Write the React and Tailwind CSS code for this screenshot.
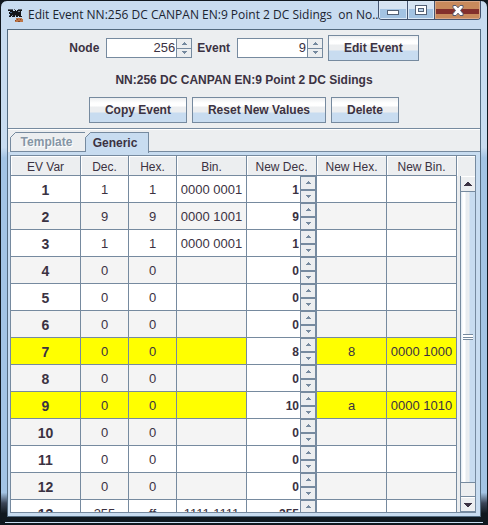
import React from "react";

const rows = [
  { ev: "1", dec: "1", hex: "1", bin: "0000 0001", newDec: "1" },
  { ev: "2", dec: "9", hex: "9", bin: "0000 1001", newDec: "9" },
  { ev: "3", dec: "1", hex: "1", bin: "0000 0001", newDec: "1" },
  { ev: "4", dec: "0", hex: "0", bin: "", newDec: "0" },
  { ev: "5", dec: "0", hex: "0", bin: "", newDec: "0" },
  { ev: "6", dec: "0", hex: "0", bin: "", newDec: "0" },
  { ev: "7", dec: "0", hex: "0", bin: "", newDec: "8", newHex: "8", newBin: "0000 1000" },
  { ev: "8", dec: "0", hex: "0", bin: "", newDec: "0" },
  { ev: "9", dec: "0", hex: "0", bin: "", newDec: "10", newHex: "a", newBin: "0000 1010" },
  { ev: "10", dec: "0", hex: "0", bin: "", newDec: "0" },
  { ev: "11", dec: "0", hex: "0", bin: "", newDec: "0" },
  { ev: "12", dec: "0", hex: "0", bin: "", newDec: "0" },
  { ev: "13", dec: "255", hex: "ff", bin: "1111 1111", newDec: "255" },
];

const headings = ["EV Var", "Dec.", "Hex.", "Bin.", "New Dec.", "New Hex.", "New Bin."];
const columns = ["w-[70px]", "w-[48px]", "w-[48px]", "w-[70px]", "w-[70px]", "w-[70px]", "w-[70px]"];

function Arrow({ down = false }) {
  return (
    <svg width="5" height="3" viewBox="0 0 5 3" shapeRendering="crispEdges" fill="#768a9f" className="block">
      <path d={down ? "M0 0H5V1H4V2H3V3H2V2H1V1H0Z" : "M2 0H3V1H4V2H5V3H0V2H1V1H2Z"} />
    </svg>
  );
}

function LocoIcon() {
  return (
    <svg width="16" height="16" viewBox="0 0 16 16" shapeRendering="crispEdges" className="mr-1 shrink-0">
      <path fill="#56606c" d="M0 2H5V3H0ZM6 2H7V3H6ZM10 2H14V3H10Z" />
      <path
        fill="#15171b"
        d="M0 3H5V4H7V3H8V4H9V3H14V4H13V9H14V10H11V9H10V10H8V9H7V10H4V9H3V10H1V9H2V7H1V5H2V4H0Z"
      />
      <path fill="#4d6f94" d="M2 5H4V6H2ZM1 8H2V9H1Z" />
      <path fill="#7d8792" d="M4 8H5V9H4ZM7 8H8V9H7ZM10 4H12V5H10Z" />
      <path fill="#bd7648" d="M8 11H14V12H15V15H7V13H8Z" />
      <path fill="#85492a" d="M9 12H10V13H9ZM12 12H13V13H12ZM10 14H12V15H10ZM7 13H8V14H7Z" />
    </svg>
  );
}

function NumberField({ id, label, value }) {
  return (
    <div className="flex items-center gap-[7px]">
      <label htmlFor={id} className="font-bold">{label}</label>
      <div className="flex h-5 w-[86px] border border-[#768a9f]">
        <input
          id={id}
          defaultValue={value}
          inputMode="numeric"
          className="w-0 min-w-0 flex-1 bg-white pr-px text-right text-[13px] outline-none"
        />
        <div className="grid w-[15px] grid-rows-2 gap-px border-l border-[#768a9f] bg-[#768a9f]">
          <button aria-label={`Increase ${label}`} className="flex items-center justify-center bg-[#eceef0]"><Arrow /></button>
          <button aria-label={`Decrease ${label}`} className="flex items-center justify-center bg-[#eceef0]"><Arrow down /></button>
        </div>
      </div>
    </div>
  );
}

function ActionButton({ children }) {
  return (
    <button className="h-[26px] border border-[#768a9f] bg-[linear-gradient(#eceef0_0px,#ffffff_5px,#ffffff_8px,#eceef0_9px,#eceef0_14px,#c8dcf0_15px,#c8dcf0_24px)] px-[15px] font-bold">
      {children}
    </button>
  );
}

function Tab({ label, selected = false }) {
  return (
    <button
      role="tab"
      aria-selected={selected}
      disabled={!selected}
      className={
        selected
          ? "relative h-[21px] w-[63px] border-t border-r border-[#768a9f] bg-[#c8dcf0] pr-[4px] pb-px font-bold"
          : "relative mb-px h-5 w-[76px] border border-[#768a9f] pr-[3px] pb-[3px] font-bold text-[#8595a5] [text-shadow:1px_1px_0_#fff]"
      }
    >
      <svg width="7" height="7" viewBox="0 0 7 7" className="absolute -top-px -left-px">
        <path d="M0 0H6L0 6Z" fill="#eceef0" />
        <path d="M0.5 7V5.5L5.5 0.5H7" fill="none" stroke="#768a9f" />
      </svg>
      {label}
    </button>
  );
}

function TitleBar() {
  return (
    <header className="flex h-7 shrink-0 items-start pl-px">
      <div className="flex min-w-0 flex-1 items-center pt-[5px] text-[#1b2430]">
        <LocoIcon />
        <h1 className="font-['Open_Sans','Noto_Sans',sans-serif] text-[12px] leading-[18px] whitespace-pre">
          Edit Event NN:256 DC CANPAN EN:9 Point 2 DC Sidings  on No...
        </h1>
      </div>
      <div className="flex h-[19px] w-[103px] shrink-0 overflow-hidden rounded-b-[4px] border border-t-0 border-[#445570]">
        <button
          aria-label="Minimize"
          className="flex w-[29px] items-center justify-center border-r border-[#445570] bg-[linear-gradient(#d6e4f2_45%,#a3c3e2_45%)] pt-[5px] shadow-[inset_0_0_0_1px_#dbe8f5]"
        >
          <span className="h-[5px] w-3 border border-[#536176] bg-white" />
        </button>
        <button
          aria-label="Maximize"
          className="flex w-[27px] items-center justify-center border-r border-[#445570] bg-[linear-gradient(#d6e4f2_45%,#a3c3e2_45%)] shadow-[inset_0_0_0_1px_#dbe8f5]"
        >
          <span className="flex h-[10px] w-3 items-center justify-center border border-[#536176] bg-white">
            <span className="h-1 w-[6px] border border-[#536176] bg-[#bdd3e9]" />
          </span>
        </button>
        <button
          aria-label="Close"
          className="flex flex-1 items-center justify-center bg-[linear-gradient(#c88a5c_45%,#83302c_45%,#83302c_72%,#c88a5c_72%)] shadow-[inset_0_0_0_1px_#d9a888]"
        >
          <svg width="12" height="11" viewBox="0 0 12 11">
            <path
              d="M1 .5H4L6 2.8L8 .5H11V2.5L8.5 5.5L11 8.5V10.5H8L6 8.2L4 10.5H1V8.5L3.5 5.5L1 2.5Z"
              fill="#fff"
              stroke="#555b70"
            />
          </svg>
        </button>
      </div>
    </header>
  );
}

function EventRow({ row, shaded }) {
  const changed = Boolean(row.newHex);
  const tone = changed ? "bg-[#ffff00]" : shaded ? "bg-[#f4f4f4]" : "bg-white";
  const cell = `h-[27px] border-r border-b border-[#768a9f] p-0 pt-[2px] text-center whitespace-nowrap ${tone}`;
  return (
    <tr>
      <th scope="row" className={`${cell} text-[14px] font-bold`}>{row.ev}</th>
      <td className={cell}>{row.dec}</td>
      <td className={cell}>{row.hex}</td>
      <td className={cell}>{row.bin}</td>
      <td className="h-[27px] border-r border-b border-[#768a9f] bg-white p-0">
        <div className="flex h-[26px]">
          <input
            aria-label={`New decimal value for EV ${row.ev}`}
            defaultValue={row.newDec}
            inputMode="numeric"
            className="w-0 min-w-0 flex-1 bg-white pt-[2px] pr-px text-right text-[12px] font-bold outline-none"
          />
          <div className="grid w-4 grid-rows-2 gap-[2px] border-t border-r border-l border-[#768a9f] bg-[#768a9f]">
            <button aria-label={`Increase EV ${row.ev}`} className="flex items-center justify-center bg-[#eceef0]"><Arrow /></button>
            <button aria-label={`Decrease EV ${row.ev}`} className="flex items-center justify-center bg-[#eceef0]"><Arrow down /></button>
          </div>
        </div>
      </td>
      <td className={cell}>{row.newHex}</td>
      <td className={cell}>{row.newBin}</td>
    </tr>
  );
}

function ScrollBar() {
  return (
    <div className="ml-[3px] flex min-h-0 flex-1 flex-col border-l border-[#768a9f] bg-[#eceef0]">
      <button aria-label="Scroll up" className="flex h-4 shrink-0 items-center justify-center border-t border-b border-t-white border-b-[#768a9f]">
        <svg width="8" height="4" viewBox="0 0 8 4" shapeRendering="crispEdges"><path d="M3 0H5V1H6V2H7V3H8V4H0V3H1V2H2V1H3Z" fill="#3b3242" /></svg>
      </button>
      <div className="flex flex-1 flex-col items-center justify-center border-b border-[#768a9f] bg-[linear-gradient(90deg,#dfe8f1_0px,#ffffff_2px,#ffffff_4px,#e6ebf0_5px,#eceef0_8px,#c8dcf0_9px)]">
        <span className="flex h-[6px] w-[10px] flex-col justify-center border-y border-[#768a9f] bg-white">
          <span className="h-px bg-[#768a9f]" />
        </span>
      </div>
      <div className="h-[14px] shrink-0 border-b border-[#768a9f]" />
      <button aria-label="Scroll down" className="flex h-[15px] shrink-0 items-center justify-center border-t border-b border-t-white border-b-[#768a9f]">
        <svg width="8" height="4" viewBox="0 0 8 4" shapeRendering="crispEdges"><path d="M0 0H8V1H7V2H6V3H5V4H3V3H2V2H1V1H0Z" fill="#3b3242" /></svg>
      </button>
    </div>
  );
}

export default function App() {
  return (
    <div className="h-screen bg-[#10181f] font-['Liberation_Sans',Arial,sans-serif] text-[12px] text-[#3b3242]">
      <div className="flex h-full flex-col overflow-hidden rounded-[7px] border border-[#10181f] bg-[linear-gradient(#c8dcf0_28%,#a3c4e4_30%,#a3c4e4_94%,#3b4658_96%,#10181f_98%)] px-[6px]">
        <TitleBar />
        <main className="flex min-h-0 flex-1 flex-col border border-[#536b80] bg-[#eceef0]">
          <section className="flex h-[99px] shrink-0 flex-col items-center border-b border-[#768a9f] pt-[5px]">
            <div className="flex items-center gap-[5px]">
              <NumberField id="node" label="Node" value="256" />
              <NumberField id="event" label="Event" value="9" />
              <ActionButton>Edit Event</ActionButton>
            </div>
            <p className="flex h-9 items-center pt-[2px] font-bold">NN:256 DC CANPAN EN:9 Point 2 DC Sidings</p>
            <div className="flex gap-[5px]">
              <ActionButton>Copy Event</ActionButton>
              <ActionButton>Reset New Values</ActionButton>
              <ActionButton>Delete</ActionButton>
            </div>
          </section>

          <div role="tablist" className="-mb-px flex shrink-0 items-end border-t border-white pt-[2px] pl-[2px]">
            <Tab label="Template" />
            <Tab label="Generic" selected />
            <span className="mb-px h-px flex-1 bg-[#768a9f]" />
          </div>

          <section className="flex min-h-0 flex-1 flex-col border-t border-[#c8dcf0] bg-[#c8dcf0] pt-[2px] pr-1 pb-[3px] pl-[2px]">
            <div className="flex min-h-0 flex-1 overflow-hidden border border-[#768a9f]">
              <div className="min-w-0 flex-1 overflow-x-hidden overflow-y-auto [scrollbar-width:none]">
                <table className="w-full table-fixed border-separate border-spacing-0 text-[13px]">
                  <colgroup>
                    {columns.map((width, i) => <col key={i} className={width} />)}
                  </colgroup>
                  <thead>
                    <tr>
                      {headings.map((heading) => (
                        <th
                          key={heading}
                          scope="col"
                          className="h-5 border-r border-b border-[#768a9f] bg-[#eceef0] p-0 pt-[3px] text-[12px] leading-4 font-normal shadow-[inset_1px_1px_0_#fff]"
                        >
                          {heading}
                        </th>
                      ))}
                    </tr>
                  </thead>
                  <tbody>
                    {rows.map((row, i) => <EventRow key={row.ev} row={row} shaded={i % 2 === 1} />)}
                  </tbody>
                </table>
              </div>
              <div className="flex w-[18px] shrink-0 flex-col bg-[#eceef0]">
                <div className="h-5 shrink-0 shadow-[inset_1px_1px_0_#fff]" />
                <ScrollBar />
              </div>
            </div>
          </section>
        </main>
        <div className="-mx-[6px] h-[7px] shrink-0 bg-[#10181f] px-1 pt-[5px]">
          <div className="h-px bg-[#c8dcf0]" />
        </div>
      </div>
    </div>
  );
}
